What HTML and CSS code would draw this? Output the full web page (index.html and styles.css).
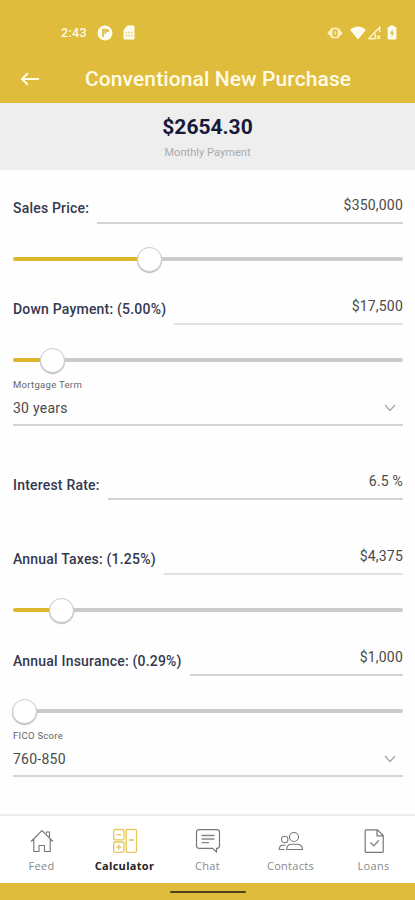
FILE: index.html
```html
<!DOCTYPE html>
<html lang="en">
<head>
<meta charset="utf-8">
<title>Conventional New Purchase</title>
<link rel="stylesheet" href="styles.css">
</head>
<body>
<div class="app">
  <header class="top">
    <div class="status">
      <span class="clock">2:43</span>
      <svg class="st-app" width="16" height="16" viewBox="0 0 16 16"><circle cx="8" cy="8" r="7.5" fill="#fffdf0"/><path d="M6 12V4.500h2.300V9" fill="none" stroke="#e0bc3c" stroke-width="1.700"/><circle cx="10.600" cy="5.600" r="1.600" fill="#e0bc3c"/></svg>
      <svg class="st-sim" width="12" height="15" viewBox="0 0 12 15"><path d="M4.500.5h6q1 0 1 1v12q0 1-1 1h-9q-1 0-1-1V5z" fill="#fffdf0"/><path d="M2.500 7.500h1.700M5.200 7.500h1.700M8 7.500h1.600M2.500 10.500h1.700M5.200 10.500h1.700M8 10.500h1.600" stroke="#e9cf75" stroke-width="1.300"/></svg>
      <span class="spacer"></span>
      <svg class="st-vib" width="16" height="12" viewBox="0 0 16 12"><path d="M.3 6 5 .8h6L15.700 6 11 11.200H5z" fill="#fff1bd"/><rect x="5.500" y="2.300" width="5" height="7.400" rx="1.500" fill="#e0bc3c"/><path d="M8 4v4" stroke="#fff1bd" stroke-width="1.200"/></svg>
      <svg class="st-wifi" width="16" height="14" viewBox="0 0 16 14"><path d="M0 3.700Q8-2.700 16 3.700L8 13.500z" fill="#fffdf0"/></svg>
      <svg class="st-cell" width="14" height="14" viewBox="0 0 14 14"><path d="M1.500 12.700 12.700 1.300v5M1.500 12.700h6.800M8.300 12.700V7.500" fill="none" stroke="#fff6d0" stroke-width="1.400"/><path d="m9.800 9.300 3.300 3.700m0-3.700L9.800 13" stroke="#fff6d0" stroke-width="1.200"/></svg>
      <svg class="st-bat" width="10" height="15" viewBox="0 0 10 15"><path d="M3 .5h4v1.300h1.500q.9 0 .9 1v10.700q0 1-.9 1h-7q-.9 0-.9-1V2.800q0-1 .9-1H3z" fill="#fffdf0"/><path d="M5.600 4 3 8.700h1.700v3.500L7 7.500H5.600z" fill="#e0bc3c"/></svg>
    </div>
    <div class="bar">
      <svg width="20" height="14" viewBox="0 0 20 14"><path d="M19 7H2M7.800 1.300 2 7l5.800 5.700" fill="none" stroke="#fffbe6" stroke-width="2"/></svg>
      <h1>Conventional New Purchase</h1>
    </div>
  </header>
  <section class="summary">
    <div class="amount">$2654.30</div>
    <div class="caption">Monthly Payment</div>
  </section>
  <main class="form">
    <div class="field f-price"><label>Sales Price:</label><div class="input">$350,000</div></div>
    <div class="slider"><i class="fill" style="width:125px"></i><i class="thumb"></i><i class="rest"></i></div>
    <div class="field f-down"><label>Down Payment: (5.00%)</label><div class="input soft">$17,500</div></div>
    <div class="slider"><i class="fill" style="width:28px"></i><i class="thumb"></i><i class="rest"></i></div>
    <div class="select s-term"><span class="name">Mortgage Term</span><span class="value">30 years</span><svg width="12" height="8" viewBox="0 0 12 8"><path d="m1 1 5 5.500L11 1" fill="none" stroke="#a5a5a5" stroke-width="1.200"/></svg></div>
    <div class="field f-rate"><label>Interest Rate:</label><div class="input">6.5 %</div></div>
    <div class="field f-tax"><label>Annual Taxes: (1.25%)</label><div class="input soft">$4,375</div></div>
    <div class="slider"><i class="fill" style="width:37px"></i><i class="thumb"></i><i class="rest"></i></div>
    <div class="field f-ins"><label>Annual Insurance: (0.29%)</label><div class="input">$1,000</div></div>
    <div class="slider"><i class="fill" style="width:0"></i><i class="thumb"></i><i class="rest"></i></div>
    <div class="select s-fico"><span class="name">FICO Score</span><span class="value">760-850</span><svg width="12" height="8" viewBox="0 0 12 8"><path d="m1 1 5 5.500L11 1" fill="none" stroke="#a5a5a5" stroke-width="1.200"/></svg></div>
  </main>
  <nav class="tabs">
    <div class="tab"><svg width="26" height="26" viewBox="0 0 26 26"><path d="M2 13.500 13 2.500l11 11M4.800 11v12.500H10V17.500h5.500v6h5.700V11M17.500 5.500V4h3v5" fill="none" stroke="#777" stroke-width="1.100"/></svg><span>Feed</span></div>
    <div class="tab active"><svg width="26" height="26" viewBox="0 0 26 26"><g fill="none" stroke="#e5c75a" stroke-width="1.300"><rect x="1.700" y="1.500" width="10.300" height="10.300" rx="1.500"/><rect x="1.700" y="14" width="10.300" height="10.300" rx="1.500"/><rect x="14.200" y="1.500" width="10.300" height="22.800" rx="1"/><path d="M4.500 6.600h4.700M4.300 19.200h5.200M6.900 16.600v5.200M17 12h5M19.500 10.800v2.400"/></g></svg><span>Calculator</span></div>
    <div class="tab"><svg width="26" height="26" viewBox="0 0 26 26"><path d="M4 1.700h18q2.500 0 2.500 2.500v13.600q0 2.500-2.500 2.500h-.5v3.600l-4-3.600H4q-2.500 0-2.500-2.500V4.200Q1.500 1.700 4 1.700z" fill="none" stroke="#777" stroke-width="1.200"/><path d="M6.500 7.500h13M6.500 11h13M6.500 14.700h7.500" stroke="#888" stroke-width="1.300"/></svg><span>Chat</span></div>
    <div class="tab"><svg width="26" height="26" viewBox="0 0 26 26"><g fill="none" stroke="#777" stroke-width="1.100"><circle cx="16" cy="9" r="4.500"/><circle cx="6.700" cy="11.500" r="3.200"/><path d="M8.700 21.500q0-5.300 5-5.300h5q5.800 0 5.800 5.300zM6.500 21.500H1.300q0-4.200 3.300-4.200h3"/></g></svg><span>Contacts</span></div>
    <div class="tab"><svg width="26" height="26" viewBox="0 0 26 26"><path d="M5 1.800h11.500l5.700 5.700v16q0 .8-.8.800H5q-.8 0-.8-.8V2.600q0-.8.8-.8zM16 1.800v6h6M9.500 14.500l3.300 3.300 5-5.500" fill="none" stroke="#777" stroke-width="1.200"/></svg><span>Loans</span></div>
  </nav>
  <footer class="system"><i></i></footer>
</div>
</body>
</html>
```
FILE: styles.css
```css
* { box-sizing: border-box; }
body { margin: 0; background: #fff; font-family: Roboto, "Liberation Sans", sans-serif; color: #4a4a4a; }
.app { width: 415px; height: 900px; display: flex; flex-direction: column; }
svg { display: block; flex: none; }
i { display: block; flex: none; }

.top { height: 103px; background: #e0bc3c; color: #fffbe6; }
.status { height: 56px; padding: 9px 18px 0 61px; display: flex; align-items: center; }
.clock { font-size: 12.5px; font-weight: 500; letter-spacing: .35px; width: 36px; }
.st-sim { margin-left: 10px; }
.spacer { flex: 1; }
.st-wifi { margin-left: 7px; }
.st-cell { margin-left: 1px; }
.st-bat { margin-left: 6px; }
.bar { height: 45px; padding-left: 20px; display: flex; align-items: center; }
.bar h1 { margin: 1px 0 0 45px; font-size: 21px; font-weight: 500; line-height: 24px; letter-spacing: .1px; white-space: nowrap; }

.summary { height: 67px; padding-top: 12px; background: #eee; text-align: center; }
.amount { font-size: 21px; line-height: 24px; font-weight: 700; color: #17193b; }
.caption { margin-top: 7px; font-size: 11px; line-height: 14px; letter-spacing: .05px; color: #aaa; }

.form { flex: 1; padding: 0 12px 0 13px; background: #fefefe; }
.field { display: flex; align-items: flex-end; gap: 8px; }
.field label { font-size: 14px; line-height: 16px; padding-bottom: 8px; font-weight: 500; letter-spacing: .2px; color: #343850; white-space: nowrap; }
.input { flex: 1; height: 28px; padding-top: 1px; border-bottom: 2px solid #d4d4d4; text-align: right; font-size: 14px; line-height: 16px; letter-spacing: .2px; }
.input.soft { border-color: #e2e2e2; }
.f-price { height: 54px; }
.f-down { height: 53px; }
.f-rate { height: 74px; }
.f-rate label { padding-bottom: 7px; }
.f-tax { height: 75px; }
.f-ins { height: 53px; }
.f-ins label { padding-bottom: 7px; }

.slider { height: 26px; margin-top: 22px; display: flex; align-items: center; }
.fill { height: 4px; border-radius: 2px 0 0 2px; background: #ddb72b; }
.thumb { width: 25px; height: 25px; margin: 0 -1px; border-radius: 50%; background: #fff; border: 1px solid #ccc; box-shadow: 0 1px 1px #bbb; position: relative; }
.rest { flex: 1; height: 4px; border-radius: 0 2px 2px 0; background: #cbcbcb; }

.select { display: grid; grid-template-columns: 1fr auto; grid-template-rows: 23px 23px; align-items: center; border-bottom: 2px solid #d4d4d4; }
.select .name { grid-column: 1 / 3; font-size: 9.5px; letter-spacing: .3px; color: #666; }
.select .value { font-size: 14px; letter-spacing: .25px; }
.select svg { margin-right: 7px; }
.s-term { height: 53px; }
.s-fico { height: 53px; }

.tabs { height: 69px; display: grid; grid-template-columns: repeat(5, 1fr); border-top: 2px solid #ececec; background: #fff; }
.tab { display: flex; flex-direction: column; align-items: center; padding-top: 12px; font-family: "Open Sans", sans-serif; font-size: 11px; line-height: 16px; letter-spacing: .3px; color: #888; }
.tab span { margin-top: 4px; }
.tab.active span { color: #222; font-weight: 700; }
.system { height: 17px; background: #e0bc3c; display: flex; justify-content: center; align-items: center; }
.system i { width: 76px; height: 2px; border-radius: 1px; background: #4b401c; }
```
